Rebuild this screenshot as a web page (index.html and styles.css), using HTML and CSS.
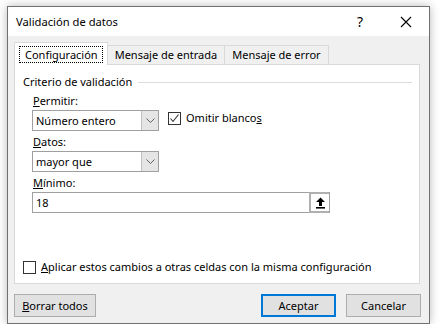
FILE: index.html
```html
<!DOCTYPE html>
<html lang="es">
<head>
  <meta charset="UTF-8">
  <title>Validación de datos</title>
  <link rel="stylesheet" href="styles.css">
</head>
<body>
  <div class="window">
    <div class="titlebar">
      <span class="title">Validación de datos</span>
      <span class="tb-btn">?</span>
      <span class="tb-btn close">
        <svg width="12" height="12" viewBox="0 0 12 12"><path d="M1 1L11 11M11 1L1 11" stroke="#000" stroke-width="1.1"/></svg>
      </span>
    </div>

    <div class="content">
      <div class="tabs">
        <div class="tab active"><span class="focus">Configuración</span></div>
        <div class="tab">Mensaje de entrada</div>
        <div class="tab">Mensaje de error</div>
      </div>

      <div class="panel">
        <div class="group-title"><span>Criterio de validación</span><i></i></div>

        <div class="label"><u>P</u>ermitir:</div>
        <div class="row">
          <div class="combo">
            <span>Número entero</span>
            <span class="drop"><svg width="9" height="5" viewBox="0 0 9 5"><path d="M0.5 0.5L4.5 4.5L8.5 0.5" fill="none" stroke="#606060"/></svg></span>
          </div>
          <label class="check">
            <span class="box"><svg width="11" height="11" viewBox="0 0 11 11"><path d="M1.5 5.5L4 8.5L9.5 1.5" fill="none" stroke="#333" stroke-width="1.1"/></svg></span>
            <span>Omitir blanco<u>s</u></span>
          </label>
        </div>

        <div class="label"><u>D</u>atos:</div>
        <div class="combo">
          <span>mayor que</span>
          <span class="drop"><svg width="9" height="5" viewBox="0 0 9 5"><path d="M0.5 0.5L4.5 4.5L8.5 0.5" fill="none" stroke="#606060"/></svg></span>
        </div>

        <div class="label"><u>M</u>ínimo:</div>
        <div class="input">
          <span>18</span>
          <span class="ref-btn"><svg width="11" height="12" viewBox="0 0 11 12"><path d="M5.5 0.5L10 5H7V9H4V5H1Z" fill="#000"/><rect x="1" y="10" width="9" height="1.6" fill="#000"/></svg></span>
        </div>

        <label class="check apply">
          <span class="box"></span>
          <span><u>A</u>plicar estos cambios a otras celdas con la misma configuración</span>
        </label>
      </div>

      <div class="buttons">
        <button class="btn"><u>B</u>orrar todos</button>
        <span class="spacer"></span>
        <button class="btn default">Aceptar</button>
        <button class="btn">Cancelar</button>
      </div>
    </div>
  </div>
</body>
</html>
```

FILE: styles.css
```css
body {
  margin: 0;
  background: #ffffff;
  font-family: 'Noto Sans', 'Open Sans', sans-serif;
  font-size: 11px;
  color: #000;
}
.window {
  width: 421px;
  height: 316px;
  margin: 6px 0 0 7px;
  border: 1px solid #707070;
  background: #f0f0f0;
  box-shadow: 0 0 9px rgba(0, 0, 0, 0.28);
}
.titlebar {
  height: 29px;
  background: #fff;
  display: flex;
  align-items: center;
  padding-left: 8px;
}
.title {
  flex: 1;
  font-size: 11.2px;
}
.tb-btn {
  width: 46px;
  height: 29px;
  display: flex;
  align-items: center;
  justify-content: center;
  font-size: 14px;
}
.content {
  padding: 7px 0 0 6px;
}
.tabs {
  display: flex;
  align-items: flex-end;
  height: 21px;
}
.tab {
  height: 18px;
  line-height: 18px;
  padding: 0 7px;
  border: 1px solid #d9d9d9;
  border-bottom: none;
  margin-left: -1px;
  background: #f0f0f0;
  white-space: nowrap;
}
.tab.active {
  margin-left: 0;
  padding: 0 4px;
  background: #fff;
  position: relative;
  z-index: 1;
  margin-bottom: -1px;
  height: 22px;
  display: flex;
  align-items: center;
}
.focus {
  border: 1px dotted #000;
  padding: 0 4px 0 5px;
  line-height: 15px;
}
.panel {
  width: 404px;
  border: 1px solid #d9d9d9;
  background: #fff;
  padding: 9px 0 0 0;
  height: 209px;
}
.group-title {
  display: flex;
  align-items: center;
  padding: 0 7px 0 8px;
  line-height: 16px;
}
.group-title i {
  flex: 1;
  height: 1px;
  background: #dcdcdc;
  margin-left: 6px;
}
.label {
  line-height: 16px;
  padding-left: 18px;
  margin-top: 3px;
  margin-bottom: 1px;
}
.row {
  display: flex;
  align-items: flex-start;
}
.combo {
  width: 125px;
  height: 19px;
  margin-left: 17px;
  border: 1px solid #a0a0a0;
  display: flex;
  align-items: center;
  background: #fff;
}
.combo span:first-child {
  flex: 1;
  padding-left: 3px;
}
.drop {
  width: 16px;
  height: 19px;
  background: #e5e5e5;
  border-left: 1px solid #c0c0c0;
  display: flex;
  align-items: center;
  justify-content: center;
}
.check {
  display: flex;
  align-items: center;
  gap: 5px;
  margin-left: 9px;
  margin-top: 1px;
  line-height: 14px;
}
.box {
  width: 11px;
  height: 11px;
  border: 1px solid #333;
  background: #fff;
  display: flex;
}
.input {
  width: 296px;
  height: 19px;
  margin-left: 17px;
  border: 1px solid #a0a0a0;
  display: flex;
  align-items: center;
}
.input span:first-child {
  flex: 1;
  padding-left: 3px;
}
.ref-btn {
  width: 18px;
  height: 17px;
  border: 2px solid #b0b0b0;
  border-right: none;
  background: #fff;
  display: flex;
  align-items: center;
  justify-content: center;
}
.apply {
  margin: 47px 0 0 8px;
  gap: 5px;
}
.buttons {
  display: flex;
  margin-top: 10px;
  width: 407px;
  gap: 10px;
}
.spacer {
  flex: 1;
}
.btn {
  height: 23px;
  width: 75px;
  background: #e1e1e1;
  border: 1px solid #adadad;
  font-family: inherit;
  font-size: 11px;
  padding: 0;
  color: #000;
}
.btn:first-child {
  width: 82px;
}
.btn.default {
  border: 2px solid #0078d7;
}
```
